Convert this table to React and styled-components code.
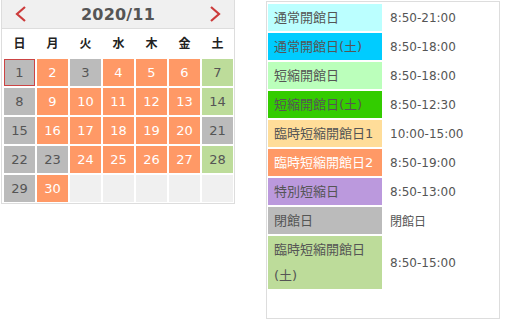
import React from 'react';
import styled, { createGlobalStyle } from 'styled-components';

const GlobalStyle = createGlobalStyle`
  body {
    margin: 0;
    background: #fff;
    font-family: "DejaVu Sans", "Noto Sans CJK JP", sans-serif;
  }
`;

const colors = {
  closed: { bg: '#bbbbbb', fg: '#555' },
  short2: { bg: '#ff9966', fg: '#fff' },
  sat: { bg: '#bddc9a', fg: '#555' },
  empty: { bg: '#f0f0f0', fg: '#555' },
};

const Page = styled.div`
  display: flex;
  align-items: flex-start;
  gap: 31px;
  padding-left: 1px;
`;

const Calendar = styled.div`
  width: 234px;
  box-sizing: border-box;
  border: 1px solid #dddddd;
  border-top: none;
`;

const Header = styled.div`
  height: 29px;
  box-sizing: border-box;
  background: #f0f0f0;
  border-bottom: 1px solid #dddddd;
  display: flex;
  align-items: center;
  justify-content: space-between;
  padding: 0 13px 0 13px;
`;

const Title = styled.div`
  font-family: "DejaVu Sans", sans-serif;
  font-weight: bold;
  font-size: 16px;
  color: #555;
  letter-spacing: 0.2px;
`;

const Arrow = styled.svg`
  width: 12px;
  height: 16px;
  display: block;
`;

const Grid = styled.div`
  display: grid;
  grid-template-columns: repeat(7, 31px);
  column-gap: 2px;
  row-gap: 2px;
  padding: 0 1px 1px 2px;
`;

const DayName = styled.div`
  height: 28px;
  line-height: 27px;
  text-align: center;
  font-family: "Noto Sans CJK JP", sans-serif;
  font-size: 12px;
  font-weight: bold;
  color: #222;
`;

const Cell = styled.div`
  height: 27px;
  box-sizing: border-box;
  line-height: 27px;
  text-align: center;
  font-size: 13px;
  background: ${p => colors[p.$kind].bg};
  color: ${p => colors[p.$kind].fg};
  border: ${p => (p.$today ? '1px solid #cc4444' : 'none')};
  line-height: ${p => (p.$today ? '25px' : '27px')};
`;

const Legend = styled.div`
  margin-top: 1px;
  width: 234px;
  height: 318px;
  box-sizing: border-box;
  border: 1px solid #dddddd;
  padding: 2px 1px;
  display: flex;
  flex-direction: column;
  gap: 2px;
`;

const Row = styled.div`
  display: grid;
  grid-template-columns: 114px 1fr;
  column-gap: 2px;
  align-items: center;
`;

const Label = styled.div`
  background: ${p => p.$bg};
  color: ${p => p.$fg || '#555'};
  font-family: "DejaVu Sans", "Noto Sans CJK JP", sans-serif;
  font-size: 13px;
  line-height: 26px;
  padding: 0.5px 4px 0.5px 6px;
`;

const Hours = styled.div`
  padding-left: 6px;
  font-family: "DejaVu Sans", "Noto Sans CJK JP", sans-serif;
  font-size: 12px;
  color: #555;
`;

const days = ['日', '月', '火', '水', '木', '金', '土'];

const kinds = {
  1: 'closed', 3: 'closed', 7: 'sat', 8: 'closed', 14: 'sat', 15: 'closed',
  21: 'closed', 22: 'closed', 23: 'closed', 28: 'sat', 29: 'closed',
};

const legend = [
  { label: '通常開館日', bg: '#bbffff', hours: '8:50-21:00' },
  { label: '通常開館日(土)', bg: '#00ccff', hours: '8:50-18:00' },
  { label: '短縮開館日', bg: '#bbffbb', hours: '8:50-18:00' },
  { label: '短縮開館日(土)', bg: '#33cc00', hours: '8:50-12:30' },
  { label: '臨時短縮開館日1', bg: '#ffdd99', hours: '10:00-15:00' },
  { label: '臨時短縮開館日2', bg: '#ff9966', fg: '#fff', hours: '8:50-19:00' },
  { label: '特別短縮日', bg: '#bb99dd', hours: '8:50-13:00' },
  { label: '閉館日', bg: '#bbbbbb', hours: '閉館日' },
  { label: '臨時短縮開館日(土)', bg: '#bddc9a', hours: '8:50-15:00' },
];

function Chevron({ flip }) {
  return (
    <Arrow viewBox="0 0 12 16">
      <path
        d={flip ? 'M2 1 L10 8 L2 15' : 'M10 1 L2 8 L10 15'}
        fill="none"
        stroke="#cc3b3b"
        strokeWidth="2.2"
      />
    </Arrow>
  );
}

export default function App() {
  const cells = [];
  for (let d = 1; d <= 35; d++) {
    if (d <= 30) {
      cells.push(
        <Cell key={d} $kind={kinds[d] || 'short2'} $today={d === 1}>{d}</Cell>
      );
    } else {
      cells.push(<Cell key={d} $kind="empty" />);
    }
  }

  return (
    <Page>
      <GlobalStyle />
      <Calendar>
        <Header>
          <Chevron />
          <Title>2020/11</Title>
          <Chevron flip />
        </Header>
        <Grid>
          {days.map(d => <DayName key={d}>{d}</DayName>)}
          {cells}
        </Grid>
      </Calendar>
      <Legend>
        {legend.map(item => (
          <Row key={item.label}>
            <Label $bg={item.bg} $fg={item.fg}>{item.label}</Label>
            <Hours>{item.hours}</Hours>
          </Row>
        ))}
      </Legend>
    </Page>
  );
}
